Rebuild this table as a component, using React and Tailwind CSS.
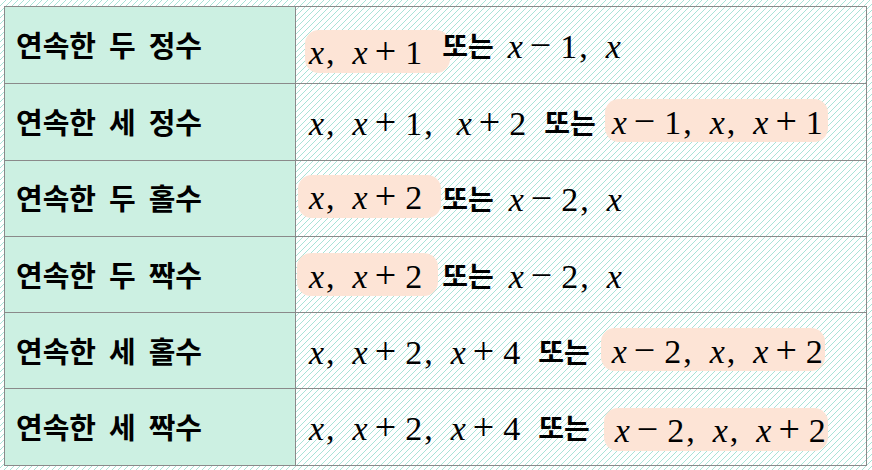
const math = "[font-family:'Liberation_Serif',serif] text-[34px] leading-none";

const X = () => <i className="italic">x</i>;
const Op = ({ c }) => <span className="ml-[7px] mr-[9px] text-[38px]">{c}</span>;
const Comma = ({ wide }) => <span className={wide ? 'ml-[2px] mr-[24px]' : 'ml-[2px] mr-[18px]'}>,</span>;

const Seq = ({ items, wideAt }) => (
  <span className={`${math} whitespace-nowrap`}>
    {items.map((it, i) => (
      <span key={i}>
        {i > 0 && <Comma wide={i === wideAt} />}
        <X />
        {it.length > 1 && <Op c={it[1]} />}
        {it.length > 1 && <span>{it[2]}</span>}
      </span>
    ))}
  </span>
);

const Pill = ({ children, cls }) => (
  <span className={`inline-flex items-center h-[43px] rounded-[14px] bg-[#fde4d6] ${cls}`}>{children}</span>
);

const Or = ({ cls }) => (
  <span className={`font-bold text-[28px] leading-none [font-family:'Noto_Sans_CJK_KR',sans-serif] ${cls}`}>또는</span>
);

const rows = [
  {
    label: '연속한 두 정수',
    body: (
      <>
        <Pill cls="-ml-[4px] pl-[4px] pr-[28px] mt-[12px]"><Seq items={['x', ['x', '+', '1']]} /></Pill>
        <Or cls="-ml-[8px] mr-[14px]" />
        <Seq items={[['x', '−', '1'], 'x']} />
      </>
    ),
  },
  {
    label: '연속한 세 정수',
    body: (
      <>
        <Seq items={['x', ['x', '+', '1'], ['x', '+', '2']]} wideAt={2} />
        <Or cls="ml-[18px] mr-[9px]" />
        <Pill cls="pl-[7px] pr-[5px] -mt-[2px]"><Seq items={[['x', '−', '1'], 'x', ['x', '+', '1']]} /></Pill>
      </>
    ),
  },
  {
    label: '연속한 두 홀수',
    body: (
      <>
        <Pill cls="-ml-[11px] pl-[11px] pr-[19px] -mt-[4px]"><Seq items={['x', ['x', '+', '2']]} /></Pill>
        <Or cls="ml-[1px] mr-[15px]" />
        <Seq items={[['x', '−', '2'], 'x']} />
      </>
    ),
  },
  {
    label: '연속한 두 짝수',
    body: (
      <>
        <Pill cls="-ml-[12px] pl-[12px] pr-[16px]"><Seq items={['x', ['x', '+', '2']]} /></Pill>
        <Or cls="ml-[4px] mr-[15px]" />
        <Seq items={[['x', '−', '2'], 'x']} />
      </>
    ),
  },
  {
    label: '연속한 세 홀수',
    body: (
      <>
        <Seq items={['x', ['x', '+', '2'], ['x', '+', '4']]} />
        <Or cls="ml-[18px] mr-[11px]" />
        <Pill cls="pl-[11px] pr-[2px] -mt-[2px]"><Seq items={[['x', '−', '2'], 'x', ['x', '+', '2']]} /></Pill>
      </>
    ),
  },
  {
    label: '연속한 세 짝수',
    body: (
      <>
        <Seq items={['x', ['x', '+', '2'], ['x', '+', '4']]} />
        <Or cls="ml-[18px] mr-[14px]" />
        <Pill cls="pl-[11px] pr-[2px] mt-[4px]"><Seq items={[['x', '−', '2'], 'x', ['x', '+', '2']]} /></Pill>
      </>
    ),
  },
];

export default function App() {
  return (
    <div className="w-[872px] h-[470px] bg-white bg-[linear-gradient(135deg,#a9e3d7_0%,#a9e3d7_6%,transparent_6%,transparent_44%,#a9e3d7_44%,#a9e3d7_56%,transparent_56%,transparent_94%,#a9e3d7_94%,#a9e3d7_100%)] bg-[length:6px_6px] pt-[6px] pl-[4px]">
      <div className="w-[863px] border border-[#8a8a8a] grid grid-cols-[291px_1fr]">
        {rows.map((r, i) => (
          <div key={i} className="contents">
            <div className={`h-[76.3px] bg-[#ccf0e2] border-r border-[#8a8a8a] flex items-center pl-[11px] ${i > 0 ? 'border-t' : ''}`}>
              <span className="font-bold text-[29px] [font-family:'Noto_Sans_CJK_KR',sans-serif] [word-spacing:0.22em] text-black">{r.label}</span>
            </div>
            <div className={`h-[76.3px] flex items-center pl-[13px] text-black ${i > 0 ? 'border-t border-[#8a8a8a]' : ''}`}>
              {r.body}
            </div>
          </div>
        ))}
      </div>
    </div>
  );
}
